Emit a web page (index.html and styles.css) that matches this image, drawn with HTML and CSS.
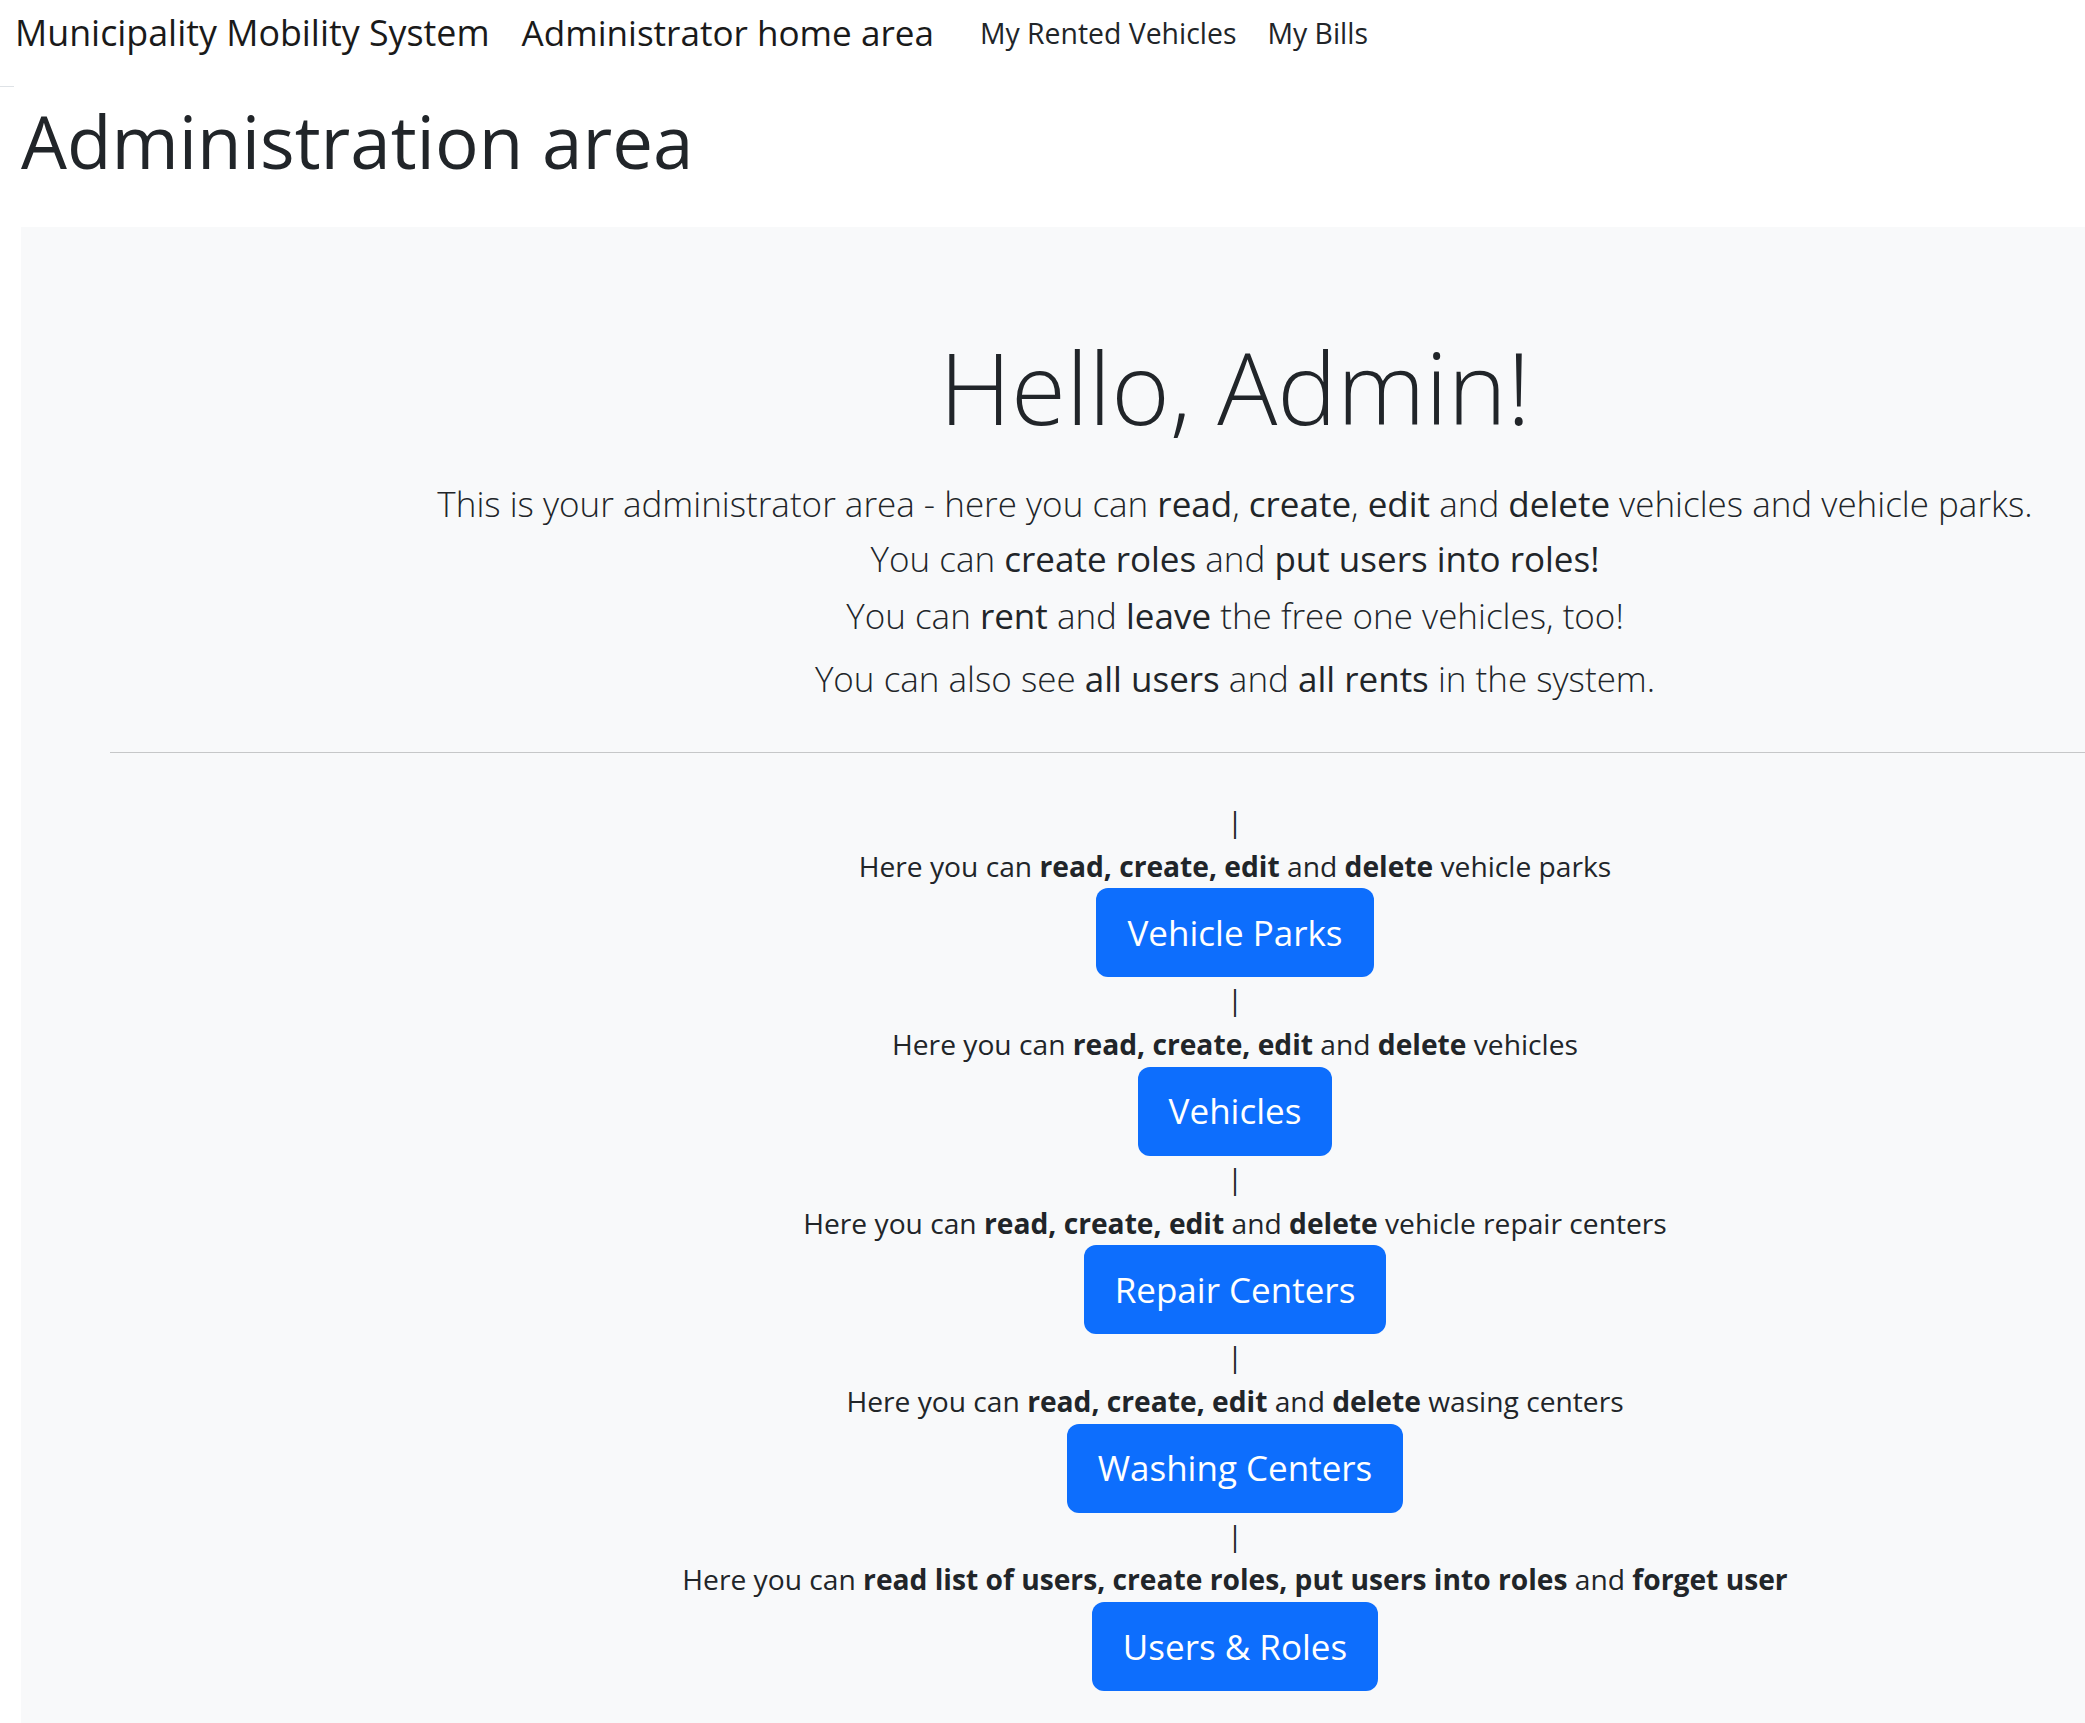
FILE: index.html
```html
<!DOCTYPE html>
<html lang="en">
<head>
<meta charset="utf-8">
<title>Administration area</title>
<link rel="stylesheet" href="styles.css">
</head>
<body>
<nav class="navbar">
  <a class="brand" href="#">Municipality Mobility System</a>
  <a class="brand brand-sub" href="#">Administrator home area</a>
  <ul class="nav-links">
    <li><a class="nav-link" href="#">My Rented Vehicles</a></li>
    <li><a class="nav-link" href="#">My Bills</a></li>
  </ul>
</nav>
<div class="nav-rule"></div>
<main class="page">
  <h1 class="page-title">Administration area</h1>
  <section class="jumbo">
    <h2 class="hello">Hello, Admin!</h2>
    <p class="lead l1">This is your administrator area - here you can <b>read</b>, <b>create</b>, <b>edit</b> and <b>delete</b> vehicles and vehicle parks.</p>
    <p class="lead l2">You can <b>create roles</b> and <b>put users into roles!</b></p>
    <p class="lead l3">You can <b>rent</b> and <b>leave</b> the free one vehicles, too!</p>
    <p class="lead l4">You can also see <b>all users</b> and <b>all rents</b> in the system.</p>
    <hr class="rule">
    <div class="steps">
      <div class="step">
        <div class="pipe">|</div>
        <div class="step-text">Here you can <b>read, create, edit</b> and <b>delete</b> vehicle parks</div>
        <a class="btn" href="#">Vehicle Parks</a>
      </div>
      <div class="step">
        <div class="pipe">|</div>
        <div class="step-text">Here you can <b>read, create, edit</b> and <b>delete</b> vehicles</div>
        <a class="btn" href="#">Vehicles</a>
      </div>
      <div class="step">
        <div class="pipe">|</div>
        <div class="step-text">Here you can <b>read, create, edit</b> and <b>delete</b> vehicle repair centers</div>
        <a class="btn" href="#">Repair Centers</a>
      </div>
      <div class="step">
        <div class="pipe">|</div>
        <div class="step-text">Here you can <b>read, create, edit</b> and <b>delete</b> wasing centers</div>
        <a class="btn" href="#">Washing Centers</a>
      </div>
      <div class="step">
        <div class="pipe">|</div>
        <div class="step-text">Here you can <b>read list of users, create roles, put users into roles</b> and <b>forget user</b></div>
        <a class="btn" href="#">Users &amp; Roles</a>
      </div>
    </div>
  </section>
</main>
</body>
</html>
```
FILE: styles.css
```css
html, body {
  margin: 0;
  padding: 0;
  overflow-x: hidden;
}
body {
  font-family: "Open Sans", "Segoe UI", sans-serif;
  color: #212529;
  background: #fff;
}
a {
  color: inherit;
  text-decoration: none;
}

/* navbar */
.navbar {
  display: flex;
  align-items: flex-start;
  height: 86px;
  padding-left: 15px;
}
.brand {
  font-size: 35.8px;
  line-height: 60px;
  margin-top: 2px;
  color: #1a1a1a;
  white-space: nowrap;
}
.brand-sub {
  margin-left: 32px;
  font-size: 35.1px;
}
.nav-links {
  display: flex;
  list-style: none;
  margin: 0 0 0 46px;
  padding: 0;
  gap: 31px;
}
.nav-link {
  display: block;
  font-size: 28.4px;
  line-height: 60px;
  margin-top: 3px;
  color: #212529;
  white-space: nowrap;
}
.nav-rule {
  width: 14px;
  height: 1px;
  background: #dee2e6;
}

/* title */
.page-title {
  margin: 9px 0 41px 21px;
  font-size: 72.7px;
  font-weight: 500;
  line-height: 90px;
}

/* jumbotron */
.jumbo {
  margin-left: 21px;
  width: 2428px;
  box-sizing: border-box;
  padding: 99px 89px 90px;
  background: #f8f9fa;
  text-align: center;
}
.hello {
  margin: 0;
  font-size: 100px;
  font-weight: 300;
  line-height: 120px;
}
.lead {
  margin: 0;
  font-size: 35px;
  font-weight: 300;
  line-height: 54px;
  white-space: nowrap;
}
.lead b {
  font-weight: 400;
}
.l1 { margin-top: 31px; }
.l2 { margin-top: 1px; }
.l3 { margin-top: 3px; }
.l4 { margin-top: 9px; }

.rule {
  margin: 46px 0 46px;
  height: 0;
  border: 0;
  border-top: 1px solid #c6c7c8;
}

/* steps */
.steps {
  display: flex;
  flex-direction: column;
  align-items: center;
}
.step {
  display: flex;
  flex-direction: column;
  align-items: center;
}
.pipe,
.step-text {
  font-size: 28.2px;
  line-height: 44.7px;
  white-space: nowrap;
}
.step-text b {
  font-weight: 700;
}
.btn {
  display: inline-block;
  box-sizing: border-box;
  height: 89px;
  padding: 17.5px 31px;
  font-size: 35px;
  line-height: 54px;
  color: #fff;
  background: #0d6efd;
  border-radius: 12px;
  white-space: nowrap;
}
```
